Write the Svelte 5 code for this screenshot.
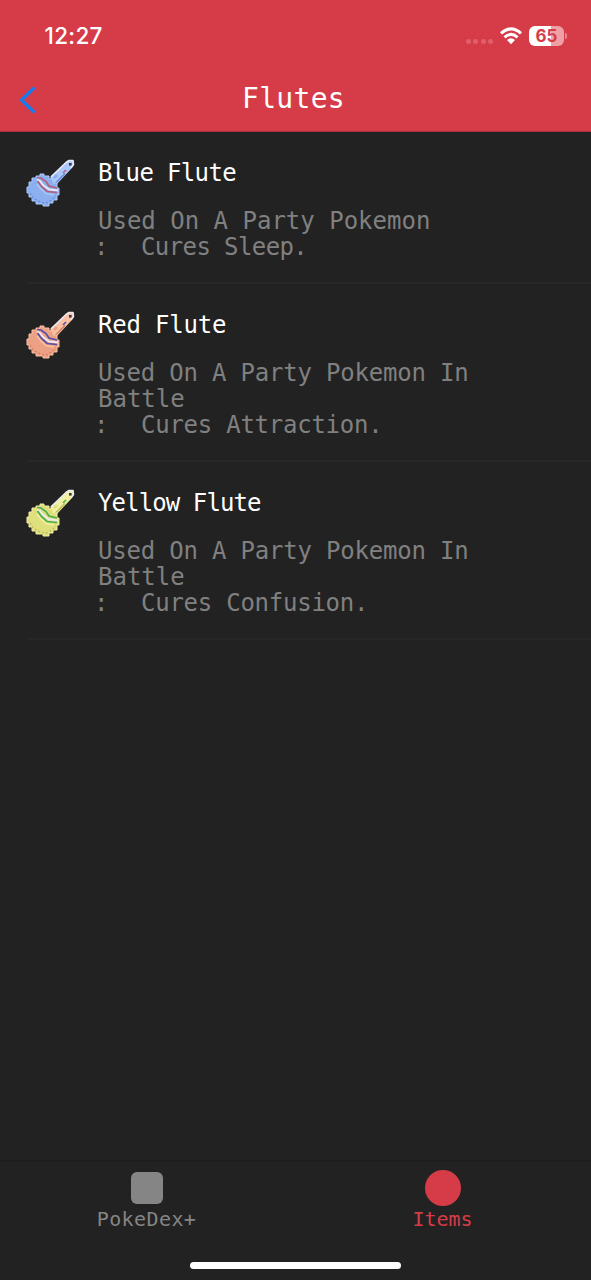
<script>
  const items = [
    {
      name: 'Blue Flute',
      lines: ['Used On A Party Pokemon'],
      effect: 'Cures Sleep.',
      height: 152, tracking: -0.65, effectTracking: -0.6,
      body: '#8bafef', light: '#abc8fb', shade: '#6688d6', stripe: '#b35f7c', edge: '#526caa'
    },
    {
      name: 'Red Flute',
      lines: ['Used On A Party Pokemon In', 'Battle'],
      effect: 'Cures Attraction.',
      height: 178, tracking: -0.2, effectTracking: -0.25,
      body: '#eda184', light: '#fbc0a4', shade: '#cf7b60', stripe: '#5550a8', edge: '#a75b46'
    },
    {
      name: 'Yellow Flute',
      lines: ['Used On A Party Pokemon In', 'Battle'],
      effect: 'Cures Confusion.',
      height: 178, tracking: -0.9, effectTracking: -0.25,
      body: '#dfdf7e', light: '#f0f0a0', shade: '#bdb657', stripe: '#4cae4a', edge: '#8e8c45'
    }
  ];
</script>

<div class="screen">
  <header>
    <div class="status">
      <span class="time">12:27</span>
      <div class="signals">
        <div class="dots"><i></i><i></i><i></i><i></i></div>
        <svg class="wifi" width="24" height="18" viewBox="0 0 24 18">
          <path d="M2 6.4Q12-2.6 22 6.4M5.5 10.3Q12 4.5 18.5 10.3" fill="none" stroke="#fff" stroke-width="3" />
          <path d="M8 13Q12 9.6 16 13L12 17.2Z" fill="#fff" />
        </svg>
        <div class="battery"><span>65</span></div>
        <i class="nub"></i>
      </div>
    </div>
    <div class="nav">
      <svg width="20" height="30" viewBox="0 0 20 30">
        <path d="M16.5 2.5 3.5 15 16.5 27.5" fill="none" stroke="#147bf3" stroke-width="3.2" />
      </svg>
      <h1>Flutes</h1>
    </div>
  </header>

  <main>
    {#each items as item}
      <article style:height="{item.height}px">
        <svg class="sprite" width="64" height="64" viewBox="0 0 64 64">
          <path d="M29 32 31 26 46 12 49 10 53 10 54 14 51 19 36 35Z" fill={item.light} />
          <path d="M31 27 46 12.5 49 10.5 53 10.5 53.5 14.5 51 18" fill="none" stroke="#e8eaf4" stroke-width="1.6" stroke-linejoin="round" />
          <path d="M35 33.5 45 23.5" stroke={item.shade} stroke-width="1.4" />
          <path d="M43 23 46 20" stroke={item.stripe} stroke-width="1.6" />
          <path d="M34 28 37 25" stroke={item.body} stroke-width="3" />
          <rect x="49" y="13" width="2.6" height="2.6" fill="#353642" />
          <path d="M16 26H20V24H24V26H29V29H33V33H37V38H39V45H37V50H33V53H29V56H23V54H16V51H12V47H9V43H7V37H9V32H12V28H16Z" fill={item.body} stroke={item.light} stroke-width="1" />
          <path d="M10 43 13 48 18 51 25 53.5 32 50 36 46" fill="none" stroke={item.shade} stroke-width="1.2" stroke-dasharray="2 2" />
          <path d="M17 27.5 21 28 26 31.5 29 36 37 38" fill="none" stroke={item.stripe} stroke-width="1.7" />
          <path d="M17 29.5 20 31 23 35 29 39.5 38 40.5" fill="none" stroke="#eceaf4" stroke-width="1.8" />
          <path d="M17.5 31 21 36 27 41.5 37 42.5" fill="none" stroke={item.stripe} stroke-width="1.7" />
          <path d="M17 34 21 39 26 43.5 34 45" fill="none" stroke={item.light} stroke-width="1.5" />
        </svg>
        <div class="copy">
          <h2 style:letter-spacing="{item.tracking}px">{item.name}</h2>
          <div class="description">
            {#each item.lines as line}<p class:long={line.length > 23}>{line}</p>{/each}
            <p class="effect" style:letter-spacing="{item.effectTracking}px"><span class="colon">:</span><span>{item.effect}</span></p>
          </div>
        </div>
      </article>
    {/each}
  </main>

  <footer>
    <nav>
      <div class="tab"><i class="square"></i><span class="dex">PokeDex+</span></div>
      <div class="tab active"><i class="circle"></i><span>Items</span></div>
    </nav>
    <div class="home"></div>
  </footer>
</div>

<style>
  :global(body) { margin: 0; background: #222; }
  .screen { width: 591px; height: 1280px; display: flex; flex-direction: column; background: #222; color: #fff; font-family: "DejaVu Sans Mono", monospace; }
  header { height: 132px; background: #d63c48; flex: none; box-sizing: border-box; border-bottom: 1px solid #a5333d; }
  .status { display: flex; justify-content: space-between; height: 70px; padding: 0 24px 0 44.5px; }
  .time { font: 550 22.5px/71px Inter, sans-serif; letter-spacing: .3px; }
  .signals { display: flex; height: 71px; align-items: center; }
  .dots { display: flex; gap: 2.3px; margin: 11px 6px 0 0; }
  .dots i { width: 5px; height: 5px; border-radius: 50%; background: #e05f69; }
  .wifi { margin-right: 6px; }
  .battery { width: 35px; height: 20px; border-radius: 6px; background: linear-gradient(90deg, #fff 64%, #efa0a5 64%); color: #d63c48; text-align: center; font: 700 17px/20px Inter, sans-serif; }
  .nub { width: 2px; height: 6px; margin-left: 1px; border-radius: 0 2px 2px 0; background: #e98b92; }
  .nav { display: grid; grid-template-columns: 51px 1fr 55px; height: 60px; align-items: center; }
  .nav svg { margin-left: 18px; }
  h1 { margin: 0; font-size: 28px; font-weight: 400; line-height: 58px; text-align: center; padding-bottom: 2px; letter-spacing: .3px; }
  main { flex: 1; }
  article { box-sizing: border-box; display: flex; padding: 18px 0 0 20px; background: linear-gradient(#272727, #272727) 27px 100% / 564px 2px no-repeat; }
  .sprite { flex: none; margin-right: 14px; filter: blur(.45px); }
  h2 { margin: 9px 0 21px; font-size: 24px; font-weight: 400; line-height: 28px; }
  .description { color: #808080; font-size: 24px; line-height: 26px; }
  p { margin: 0; white-space: nowrap; }
  .long { letter-spacing: -.2px; }
  .effect { display: flex; }
  .colon { width: 47px; margin-left: -4px; }
  footer { height: 120px; box-sizing: border-box; border-top: 2px solid #1d1d1d; display: flex; flex-direction: column; align-items: center; }
  nav { width: 100%; height: 102px; display: grid; grid-template-columns: 293px 299px; }
  .tab { display: flex; flex-direction: column; align-items: center; color: #858585; font-size: 20px; line-height: 24px; }
  .tab i { flex: none; box-sizing: border-box; }
  .square { width: 32px; height: 32px; margin: 10px 0 3px; border-radius: 6px; background: #858585; }
  .circle { width: 36px; height: 36px; margin: 8px 0 1px; border-radius: 50%; background: #d63c48; }
  .dex { letter-spacing: .4px; }
  .active { color: #d63c48; }
  .home { width: 211px; height: 7px; margin-top: -2px; border-radius: 4px; background: #fff; }
</style>
